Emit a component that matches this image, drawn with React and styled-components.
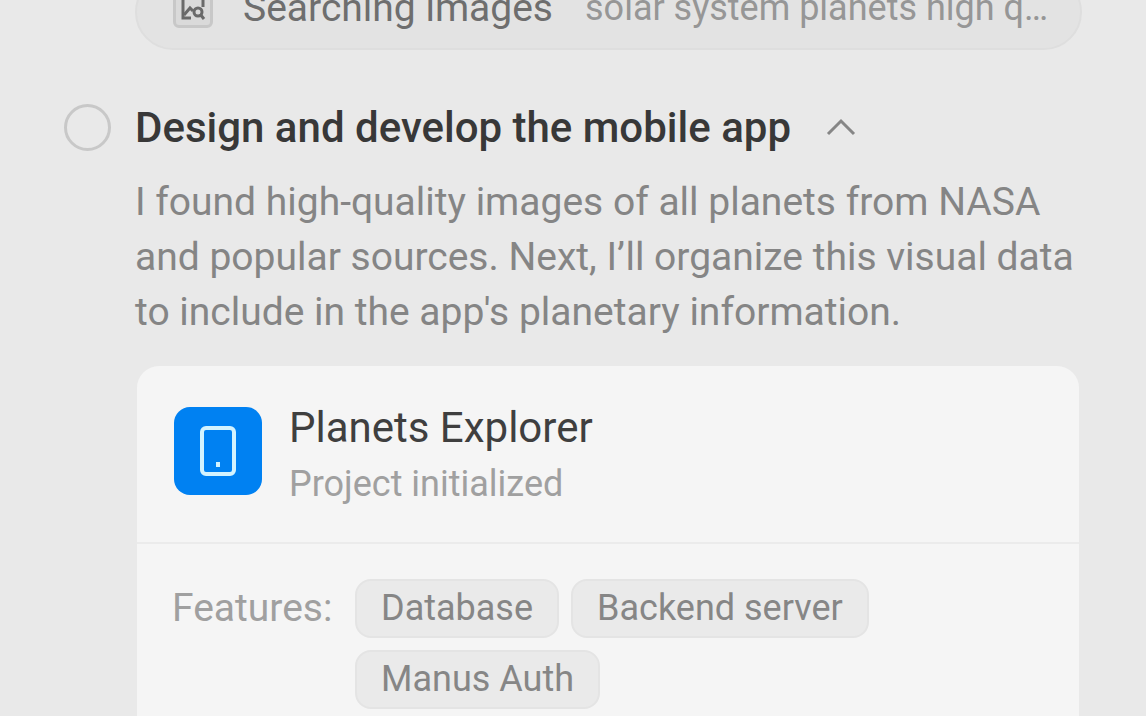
import React, { useState } from 'react';
import styled, { createGlobalStyle } from 'styled-components';

const GlobalStyle = createGlobalStyle`
  * {
    box-sizing: border-box;
  }

  body {
    margin: 0;
    background-color: #e9e9e9;
    font-family: Roboto, 'Liberation Sans', sans-serif;
  }
`;

const Viewport = styled.main`
  height: 100vh;
  overflow: hidden;
`;

/* the feed is scrolled so that the first step runs off the top */
const Feed = styled.div`
  margin-top: -26px;
  padding: 0 64px;
`;

const StepBody = styled.div`
  padding-left: 71px;
`;

const ActionPill = styled.div`
  display: flex;
  align-items: center;
  height: 76px;
  padding: 0 20px 8px 36px;
  background-color: #e3e3e3;
  border: 2px solid #dedede;
  border-radius: 38px;
  white-space: nowrap;
`;

const ActionIcon = styled.span`
  flex: none;
  display: flex;
  align-items: center;
  justify-content: center;
  width: 40px;
  height: 40px;
  margin-right: 30px;
  background-color: #dadada;
  border: 3px solid #c8c8c8;
  border-radius: 6px;
`;

const ActionName = styled.span`
  margin-right: 32px;
  color: #6e6e6e;
  font-size: 39px;
`;

const ActionQuery = styled.span`
  flex: 1;
  min-width: 0;
  overflow: hidden;
  text-overflow: ellipsis;
  color: #969696;
  font-size: 36px;
`;

const StepHeader = styled.div`
  display: flex;
  align-items: center;
  height: 56px;
  margin-top: 49px;
`;

const StepMark = styled.span`
  flex: none;
  width: 47px;
  height: 47px;
  margin-right: 24px;
  border: 3px solid #c8c8c8;
  border-radius: 50%;
`;

const StepTitle = styled.h2`
  margin: 0;
  color: #383838;
  font-size: 42px;
  font-weight: 500;
`;

const ToggleButton = styled.button`
  display: flex;
  margin-left: 30px;
  padding: 4px;
  background: none;
  border: none;
  color: #868686;
  cursor: pointer;
`;

const StepText = styled.p`
  margin: 20px 0 26px;
  color: #858585;
  font-size: 39px;
  line-height: 55px;
`;

const Card = styled.section`
  margin: 0 3px 0 2px;
  background-color: #f5f5f5;
  border-radius: 22px;
`;

const CardHeader = styled.header`
  display: flex;
  align-items: center;
  height: 178px;
  padding: 0 37px 6px;
  border-bottom: 2px solid #ebebeb;
`;

const AppIcon = styled.span`
  flex: none;
  display: flex;
  align-items: center;
  justify-content: center;
  width: 88px;
  height: 88px;
  margin-right: 27px;
  background-color: #0081f2;
  border-radius: 16px;
`;

const CardHeading = styled.div`
  padding-top: 10px;
`;

const CardTitle = styled.h3`
  margin: 0;
  color: #3f3f3f;
  font-size: 42px;
  font-weight: 400;
  line-height: 56px;
`;

const CardStatus = styled.p`
  margin: 0;
  color: #a0a0a0;
  font-size: 36px;
  line-height: 56px;
`;

const Features = styled.div`
  display: flex;
  padding: 35px;
`;

const FeaturesLabel = styled.span`
  flex: none;
  width: 183px;
  color: #a0a0a0;
  font-size: 39px;
  line-height: 59px;
`;

const ChipList = styled.ul`
  display: flex;
  flex-wrap: wrap;
  gap: 12px;
  max-width: 560px;
  margin: 0;
  padding: 0;
  list-style: none;
`;

const Chip = styled.li`
  padding: 0 24px;
  background-color: #eaeaea;
  border: 2px solid #e4e4e4;
  border-radius: 16px;
  color: #868686;
  font-size: 36px;
  line-height: 55px;
`;

const features = ['Database', 'Backend server', 'Manus Auth'];

const ImageSearchIcon = () => (
  <svg width="28" height="28" viewBox="0 0 28 28" fill="none" stroke="#6a6a6a" strokeWidth="3" aria-hidden="true">
    <path d="M12 24H4V4h20v9" />
    <path d="M5 21l6-7 3 3" />
    <circle cx="19" cy="18" r="4" />
    <path d="M21 20l4 5" />
  </svg>
);

const ChevronUp = () => (
  <svg width="32" height="24" viewBox="0 0 32 24" fill="none" stroke="currentColor" strokeWidth="3" aria-hidden="true">
    <path d="M3 19L16 6l13 13" />
  </svg>
);

const PhoneIcon = () => (
  <svg width="40" height="52" viewBox="0 0 40 52" fill="none" stroke="#d3f3ff" strokeWidth="4" aria-hidden="true">
    <rect x="4" y="3" width="32" height="46" rx="4" />
    <path d="M20 37v5" />
  </svg>
);

const App = () => {
  const [open, setOpen] = useState(true);

  return (
    <Viewport>
      <GlobalStyle />
      <Feed>
        <StepBody>
          <ActionPill>
            <ActionIcon>
              <ImageSearchIcon />
            </ActionIcon>
            <ActionName>Searching images</ActionName>
            <ActionQuery>solar system planets high quality images</ActionQuery>
          </ActionPill>
        </StepBody>

        <StepHeader>
          <StepMark />
          <StepTitle>Design and develop the mobile app</StepTitle>
          <ToggleButton type="button" aria-label="Toggle step" aria-expanded={open} onClick={() => setOpen(!open)}>
            <ChevronUp />
          </ToggleButton>
        </StepHeader>

        {open && (
          <StepBody>
            <StepText>
              I found high-quality images of all planets from NASA and popular sources. Next, I’ll organize this
              visual data to include in the app's planetary information.
            </StepText>

            {/* Project card */}
            <Card>
              <CardHeader>
                <AppIcon>
                  <PhoneIcon />
                </AppIcon>
                <CardHeading>
                  <CardTitle>Planets Explorer</CardTitle>
                  <CardStatus>Project initialized</CardStatus>
                </CardHeading>
              </CardHeader>
              <Features>
                <FeaturesLabel>Features:</FeaturesLabel>
                <ChipList>
                  {features.map((name) => (
                    <Chip key={name}>{name}</Chip>
                  ))}
                </ChipList>
              </Features>
            </Card>
          </StepBody>
        )}
      </Feed>
    </Viewport>
  );
};

export default App;
